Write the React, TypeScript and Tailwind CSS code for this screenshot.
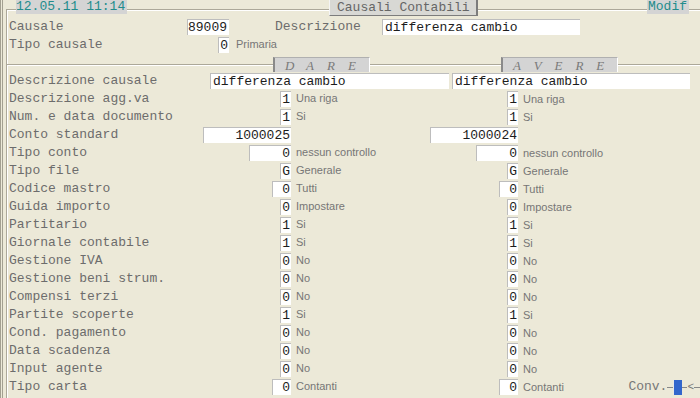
const mono = "font-['Liberation_Mono','Courier_New',monospace]";
const sans = "font-['Liberation_Sans',Arial,sans-serif]";

type Side = { v: string; t: string };
type Row = { label: string; box: string; d: Side; a: Side };

const rows: Row[] = [
  { label: 'Descrizione agg.va', box: 'w-[11px]', d: { v: '1', t: 'Una riga' }, a: { v: '1', t: 'Una riga' } },
  { label: 'Num. e data documento', box: 'w-[11px]', d: { v: '1', t: 'Si' }, a: { v: '1', t: 'Si' } },
  { label: 'Conto standard', box: 'w-[88px]', d: { v: '1000025', t: '' }, a: { v: '1000024', t: '' } },
  { label: 'Tipo conto', box: 'w-[42px]', d: { v: '0', t: 'nessun controllo' }, a: { v: '0', t: 'nessun controllo' } },
  { label: 'Tipo file', box: 'w-[11px]', d: { v: 'G', t: 'Generale' }, a: { v: 'G', t: 'Generale' } },
  { label: 'Codice mastro', box: 'w-[19px]', d: { v: '0', t: 'Tutti' }, a: { v: '0', t: 'Tutti' } },
  { label: 'Guida importo', box: 'w-[11px]', d: { v: '0', t: 'Impostare' }, a: { v: '0', t: 'Impostare' } },
  { label: 'Partitario', box: 'w-[11px]', d: { v: '1', t: 'Si' }, a: { v: '1', t: 'Si' } },
  { label: 'Giornale contabile', box: 'w-[11px]', d: { v: '1', t: 'Si' }, a: { v: '1', t: 'Si' } },
  { label: 'Gestione IVA', box: 'w-[11px]', d: { v: '0', t: 'No' }, a: { v: '0', t: 'No' } },
  { label: 'Gestione beni strum.', box: 'w-[11px]', d: { v: '0', t: 'No' }, a: { v: '0', t: 'No' } },
  { label: 'Compensi terzi', box: 'w-[11px]', d: { v: '0', t: 'No' }, a: { v: '0', t: 'No' } },
  { label: 'Partite scoperte', box: 'w-[11px]', d: { v: '1', t: 'Si' }, a: { v: '1', t: 'Si' } },
  { label: 'Cond. pagamento', box: 'w-[11px]', d: { v: '0', t: 'No' }, a: { v: '0', t: 'No' } },
  { label: 'Data scadenza', box: 'w-[11px]', d: { v: '0', t: 'No' }, a: { v: '0', t: 'No' } },
  { label: 'Input agente', box: 'w-[11px]', d: { v: '0', t: 'No' }, a: { v: '0', t: 'No' } },
  { label: 'Tipo carta', box: 'w-[19px]', d: { v: '0', t: 'Contanti' }, a: { v: '0', t: 'Contanti' } },
];

function Box({ value, className = '', left = false }: { value: string; className?: string; left?: boolean }) {
  return (
    <div
      className={`h-[16px] bg-white border-t border-l border-[#bdbdbd] text-[13px] leading-[15px] text-[#1c1c1c] whitespace-pre ${
        left ? 'text-left pl-[2px]' : 'text-right pr-[1px]'
      } ${className}`}
    >
      {value}
    </div>
  );
}

function Hint({ text }: { text: string }) {
  return <span className={`${sans} text-[11px] text-[#767676] whitespace-nowrap`}>{text}</span>;
}

function Etched({ className = '' }: { className?: string }) {
  return <div className={`h-[2px] border-t border-[#aca899] border-b border-b-white ${className}`} />;
}

function Legend({ letters }: { letters: string[] }) {
  return (
    <div className="h-[15px] flex items-center bg-[#d4d4d4] border-l-2 border-t border-[#8a8a8a] border-t-[#b0b0b0] border-r border-r-white pl-[10px]">
      {letters.map((l, i) => (
        <span key={i} className="w-[23px] font-['Liberation_Serif',serif] italic text-[13px] text-[#7a7a7a] leading-none">
          {l}
        </span>
      ))}
    </div>
  );
}

export default function App() {
  return (
    <div className={`w-[700px] h-[398px] bg-[#ece9d8] flex overflow-hidden ${mono} text-[13px] text-[#6c6c6c]`}>
      {/* left window edge */}
      <div className="w-[6px] shrink-0 border-l-[3px] border-double border-[#a3a091]" />

      {/* group frame */}
      <div className="flex-1 mt-[9px] border-t border-l border-[#aca899] shadow-[inset_1px_1px_0_#fff] flex flex-col">
        {/* title bar */}
        <div className="-mt-[10px] h-[18px] flex items-start shrink-0 whitespace-nowrap">
          <div className="ml-[9px] w-[111px] h-[14px] bg-[#d4d4d4] leading-[14px] text-[#238c8c] overflow-hidden">
            12.05.11 11:14
          </div>
          <div className="ml-[202px] w-[149px] h-[16px] bg-[#d8d8d4] border-l border-l-[#f4f4f4] border-r-2 border-b border-[#7c7c7c] pl-[7px] leading-[15px] text-[#666]">
            Causali Contabili
          </div>
          <div className="ml-[169px] w-[42px] h-[14px] bg-[#d4d4d4] pl-[1px] leading-[14px] text-[#238c8c]">
            Modif
          </div>
        </div>

        {/* header fields */}
        <div className="h-[18px] flex items-center pl-[2px]">
          <span className="w-[178px]">Causale</span>
          <Box value="89009" className="w-[42px] pr-[2px]" />
          <span className="ml-[46px] w-[107px]">Descrizione</span>
          <Box value="differenza cambio" left className="w-[198px]" />
        </div>
        <div className="h-[18px] flex items-center pl-[2px]">
          <span className="w-[209px]">Tipo causale</span>
          <Box value="0" className="w-[11px]" />
          <span className="ml-[7px]">
            <Hint text="Primaria" />
          </span>
        </div>

        {/* DARE / AVERE separator */}
        <div className="h-[18px] flex items-end">
          <Etched className="w-[266px] self-start mt-[10px]" />
          <div className="w-[97px]">
            <Legend letters={['D', 'A', 'R', 'E']} />
          </div>
          <Etched className="w-[131px] self-start mt-[10px]" />
          <div className="w-[117px]">
            <Legend letters={['A', 'V', 'E', 'R', 'E']} />
          </div>
          <Etched className="flex-1 self-start mt-[10px]" />
        </div>

        {/* detail rows */}
        <div className="h-[18px] flex items-center pl-[2px]">
          <span className="w-[180px]">Descrizione causale</span>
          <Box value="differenza cambio" left className="ml-[21px] w-[239px]" />
          <Box value="differenza cambio" left className="ml-[3px] w-[238px]" />
        </div>

        {rows.map((r, i) => (
          <div key={r.label} className="h-[18px] flex items-center pl-[2px]">
            <span className="w-[180px] whitespace-pre">{r.label}</span>
            <div className="w-[102px] flex justify-end">
              <Box value={r.d.v} className={r.box} />
            </div>
            <div className="w-[129px] pl-[5px]">
              <Hint text={r.d.t} />
            </div>
            <div className="w-[98px] flex justify-end">
              <Box value={r.a.v} className={r.box} />
            </div>
            <div className="flex-1 pl-[5px] flex items-center">
              <Hint text={r.a.t} />
              {i === rows.length - 1 && (
                <div className="ml-auto flex items-center">
                  <span className="text-[#777]">Conv.</span>
                  <div className="w-[6px] h-px bg-[#888]" />
                  <div className="w-[9px] h-[15px] bg-[#3366cc] border-l border-[#e8e8e8]" />
                  <div className="w-[5px] h-px bg-[#888]" />
                  <span className="text-[11px] leading-none text-[#777]">&lt;</span>
                  <div className="w-[6px] h-px bg-[#888]" />
                </div>
              )}
            </div>
          </div>
        ))}
      </div>
    </div>
  );
}
